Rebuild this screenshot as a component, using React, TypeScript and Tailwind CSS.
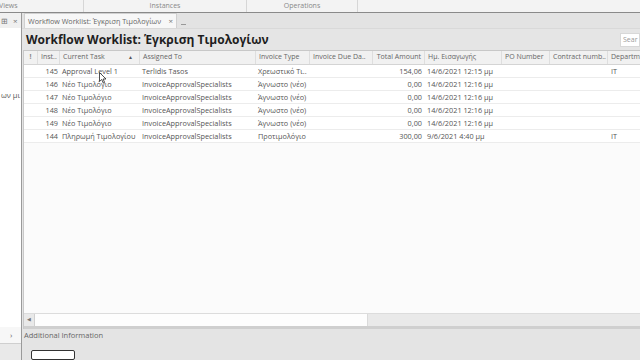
import React from 'react';

const cols = [
  { key: 'flag', label: '!', w: 14 },
  { key: 'inst', label: 'Inst..', w: 22 },
  { key: 'task', label: 'Current Task', w: 80 },
  { key: 'assigned', label: 'Assigned To', w: 116 },
  { key: 'type', label: 'Invoice Type', w: 54 },
  { key: 'due', label: 'Invoice Due Da..', w: 63 },
  { key: 'total', label: 'Total Amount', w: 52 },
  { key: 'date', label: 'Ημ. Εισαγωγής', w: 77 },
  { key: 'po', label: 'PO Number', w: 48 },
  { key: 'contract', label: 'Contract numb..', w: 58 },
  { key: 'dept', label: 'Departm', w: 60 },
];

const rows = [
  { inst: '145', task: 'Approval Level 1', assigned: 'Terlidis Tasos', type: 'Χρεωστικό Τι..', total: '154,06', date: '14/6/2021 12:15 μμ', dept: 'IT' },
  { inst: '146', task: 'Νέο Τιμολόγιο', assigned: 'InvoiceApprovalSpecialists', type: 'Άγνωστο (νέο)', total: '0,00', date: '14/6/2021 12:16 μμ', dept: '' },
  { inst: '147', task: 'Νέο Τιμολόγιο', assigned: 'InvoiceApprovalSpecialists', type: 'Άγνωστο (νέο)', total: '0,00', date: '14/6/2021 12:16 μμ', dept: '' },
  { inst: '148', task: 'Νέο Τιμολόγιο', assigned: 'InvoiceApprovalSpecialists', type: 'Άγνωστο (νέο)', total: '0,00', date: '14/6/2021 12:16 μμ', dept: '' },
  { inst: '149', task: 'Νέο Τιμολόγιο', assigned: 'InvoiceApprovalSpecialists', type: 'Άγνωστο (νέο)', total: '0,00', date: '14/6/2021 12:16 μμ', dept: '' },
  { inst: '144', task: 'Πληρωμή Τιμολογίου', assigned: 'InvoiceApprovalSpecialists', type: 'Προτιμολόγιο', total: '300,00', date: '9/6/2021 4:40 μμ', dept: 'IT' },
];

const App: React.FC = () => {
  return (
    <div
      className="w-[640px] h-[360px] overflow-hidden bg-[#e5e5e5] text-[#444] flex flex-col relative"
      style={{ fontFamily: '"Open Sans", "Noto Sans", sans-serif' }}
    >
      {/* top ribbon group labels */}
      <div className="h-[13px] shrink-0 flex bg-[#f3f3f3] border-b border-[#8a8a8a] text-[7px] text-[#888] leading-[12px]">
        <div className="w-[85px] border-r border-[#d6d6d6] -ml-[1px]">Views</div>
        <div className="w-[163px] border-r border-[#d6d6d6] text-center">Instances</div>
        <div className="w-[110px] text-center">Operations</div>
        <div className="flex-1 border-l border-[#d6d6d6]"></div>
      </div>

      <div className="flex-1 flex min-h-0">
        {/* left collapsed pane */}
        <div className="w-[22px] shrink-0 flex flex-col bg-white border-r border-[#9a9a9a]">
          <div className="h-[15px] flex items-center gap-[5px] px-[1px] bg-[#f0f0f0] text-[8px] text-[#777]">
            <span>⊞</span>
            <span>×</span>
          </div>
          <div className="h-[62px]"></div>
          <div className="text-[7.5px] text-[#555] whitespace-nowrap overflow-hidden pl-[1px]">ων μι</div>
          <div className="flex-1"></div>
          <div className="h-[17px] flex items-center pl-[10px] text-[8px] text-[#666] bg-[#f7f7f7] border-b border-[#cfcfcf]">›</div>
          <div className="h-[16px] bg-[#e9e9e9]"></div>
        </div>

        {/* main document area */}
        <div className="flex-1 flex flex-col min-w-0">
          {/* tab strip */}
          <div className="h-[16px] shrink-0 flex items-end pl-[2px] bg-[#e3e3e3] border-b border-[#d9d9d9]">
            <div className="h-[15px] w-[153px] flex items-center justify-between px-[3px] bg-[#f7f7f7] border border-b-0 border-[#d0d0d0] text-[7.2px] text-[#666] whitespace-nowrap">
              <span>Workflow Worklist: Έγκριση Τιμολογίων</span>
              <span className="text-[8px] text-[#777]">×</span>
            </div>
            <div className="ml-[4px] mb-[3px] w-[5px] h-[1px] bg-[#999]"></div>
          </div>

          {/* title row */}
          <div className="h-[21px] shrink-0 flex items-center justify-between pl-[4px]">
            <div className="text-[12px] font-bold text-[#1e1e1e] whitespace-nowrap">
              Workflow Worklist: Έγκριση Τιμολογίων
            </div>
            <div className="w-[20px] h-[14px] bg-white border border-[#d8d8d8] text-[7px] text-[#999] pl-[2px] leading-[12px] overflow-hidden whitespace-nowrap">
              Sear
            </div>
          </div>

          {/* grid */}
          <div className="flex-1 flex flex-col min-h-0 ml-[1px] border-t border-l border-[#c8c8c8] bg-[#fbfbfb]">
            <div className="h-[14px] shrink-0 flex bg-[#f1f1f1] border-b border-[#d4d4d4] text-[7px] text-[#666] whitespace-nowrap">
              {cols.map((c) => (
                <div
                  key={c.key}
                  className={`shrink-0 flex items-center px-[3px] border-r border-[#dedede] overflow-hidden ${
                    c.key === 'flag' ? 'justify-center font-bold text-[#888]' : ''
                  } ${c.key === 'total' ? 'justify-end' : ''}`}
                  style={{ width: c.w }}
                >
                  {c.key === 'task' ? (
                    <>
                      <span className="flex-1">{c.label}</span>
                      <span className="text-[5px] text-[#555] mr-[3px]">▲</span>
                    </>
                  ) : (
                    c.label
                  )}
                </div>
              ))}
            </div>

            <div className="flex flex-col text-[7.3px] text-[#555] whitespace-nowrap">
              {rows.map((r) => (
                <div key={r.inst} className="h-[13px] flex items-center bg-white border-b border-[#ececec]">
                  <div className="shrink-0 w-[14px]"></div>
                  <div className="shrink-0 w-[22px] text-right pr-[2px]">{r.inst}</div>
                  <div className="shrink-0 w-[80px] pl-[2px]">{r.task}</div>
                  <div className="shrink-0 w-[116px] pl-[2px]">{r.assigned}</div>
                  <div className="shrink-0 w-[54px] pl-[2px] overflow-hidden">{r.type}</div>
                  <div className="shrink-0 w-[63px]"></div>
                  <div className="shrink-0 w-[52px] text-right pr-[3px]">{r.total}</div>
                  <div className="shrink-0 w-[77px] pl-[2px]">{r.date}</div>
                  <div className="shrink-0 w-[48px]"></div>
                  <div className="shrink-0 w-[58px]"></div>
                  <div className="shrink-0 w-[60px] pl-[3px]">{r.dept}</div>
                </div>
              ))}
            </div>

            <div className="flex-1"></div>

            {/* horizontal scrollbar */}
            <div className="h-[16px] shrink-0 flex items-stretch bg-[#e9e9e9] border-t border-[#dcdcdc] border-b-[3px] border-b-[#cfcfcf]">
              <div className="w-[11px] flex items-center justify-center text-[5px] text-[#777] border-r border-[#d0d0d0]">◀</div>
              <div className="w-[333px] bg-[#fdfdfd] border-r border-[#dadada]"></div>
              <div className="flex-1"></div>
            </div>
          </div>

          {/* additional information */}
          <div className="h-[31px] shrink-0 flex flex-col bg-[#e4e4e4] pl-[2px]">
            <div className="h-[16px] flex items-center text-[7.5px] text-[#666]">Additional Information</div>
            <div className="ml-[7px] mt-[8px] w-[44px] h-[12px] border border-[#333] rounded-[2px] bg-white"></div>
          </div>
        </div>
      </div>

      {/* mouse pointer */}
      <svg className="absolute left-[99px] top-[72px]" width="8" height="12" viewBox="0 0 8 12">
        <path d="M0.5 0.5 L0.5 9.5 L2.7 7.5 L4.3 11 L5.6 10.4 L4.1 7 L7 7 Z" fill="white" stroke="#222" strokeWidth="0.8" />
      </svg>
    </div>
  );
};

export default App;
